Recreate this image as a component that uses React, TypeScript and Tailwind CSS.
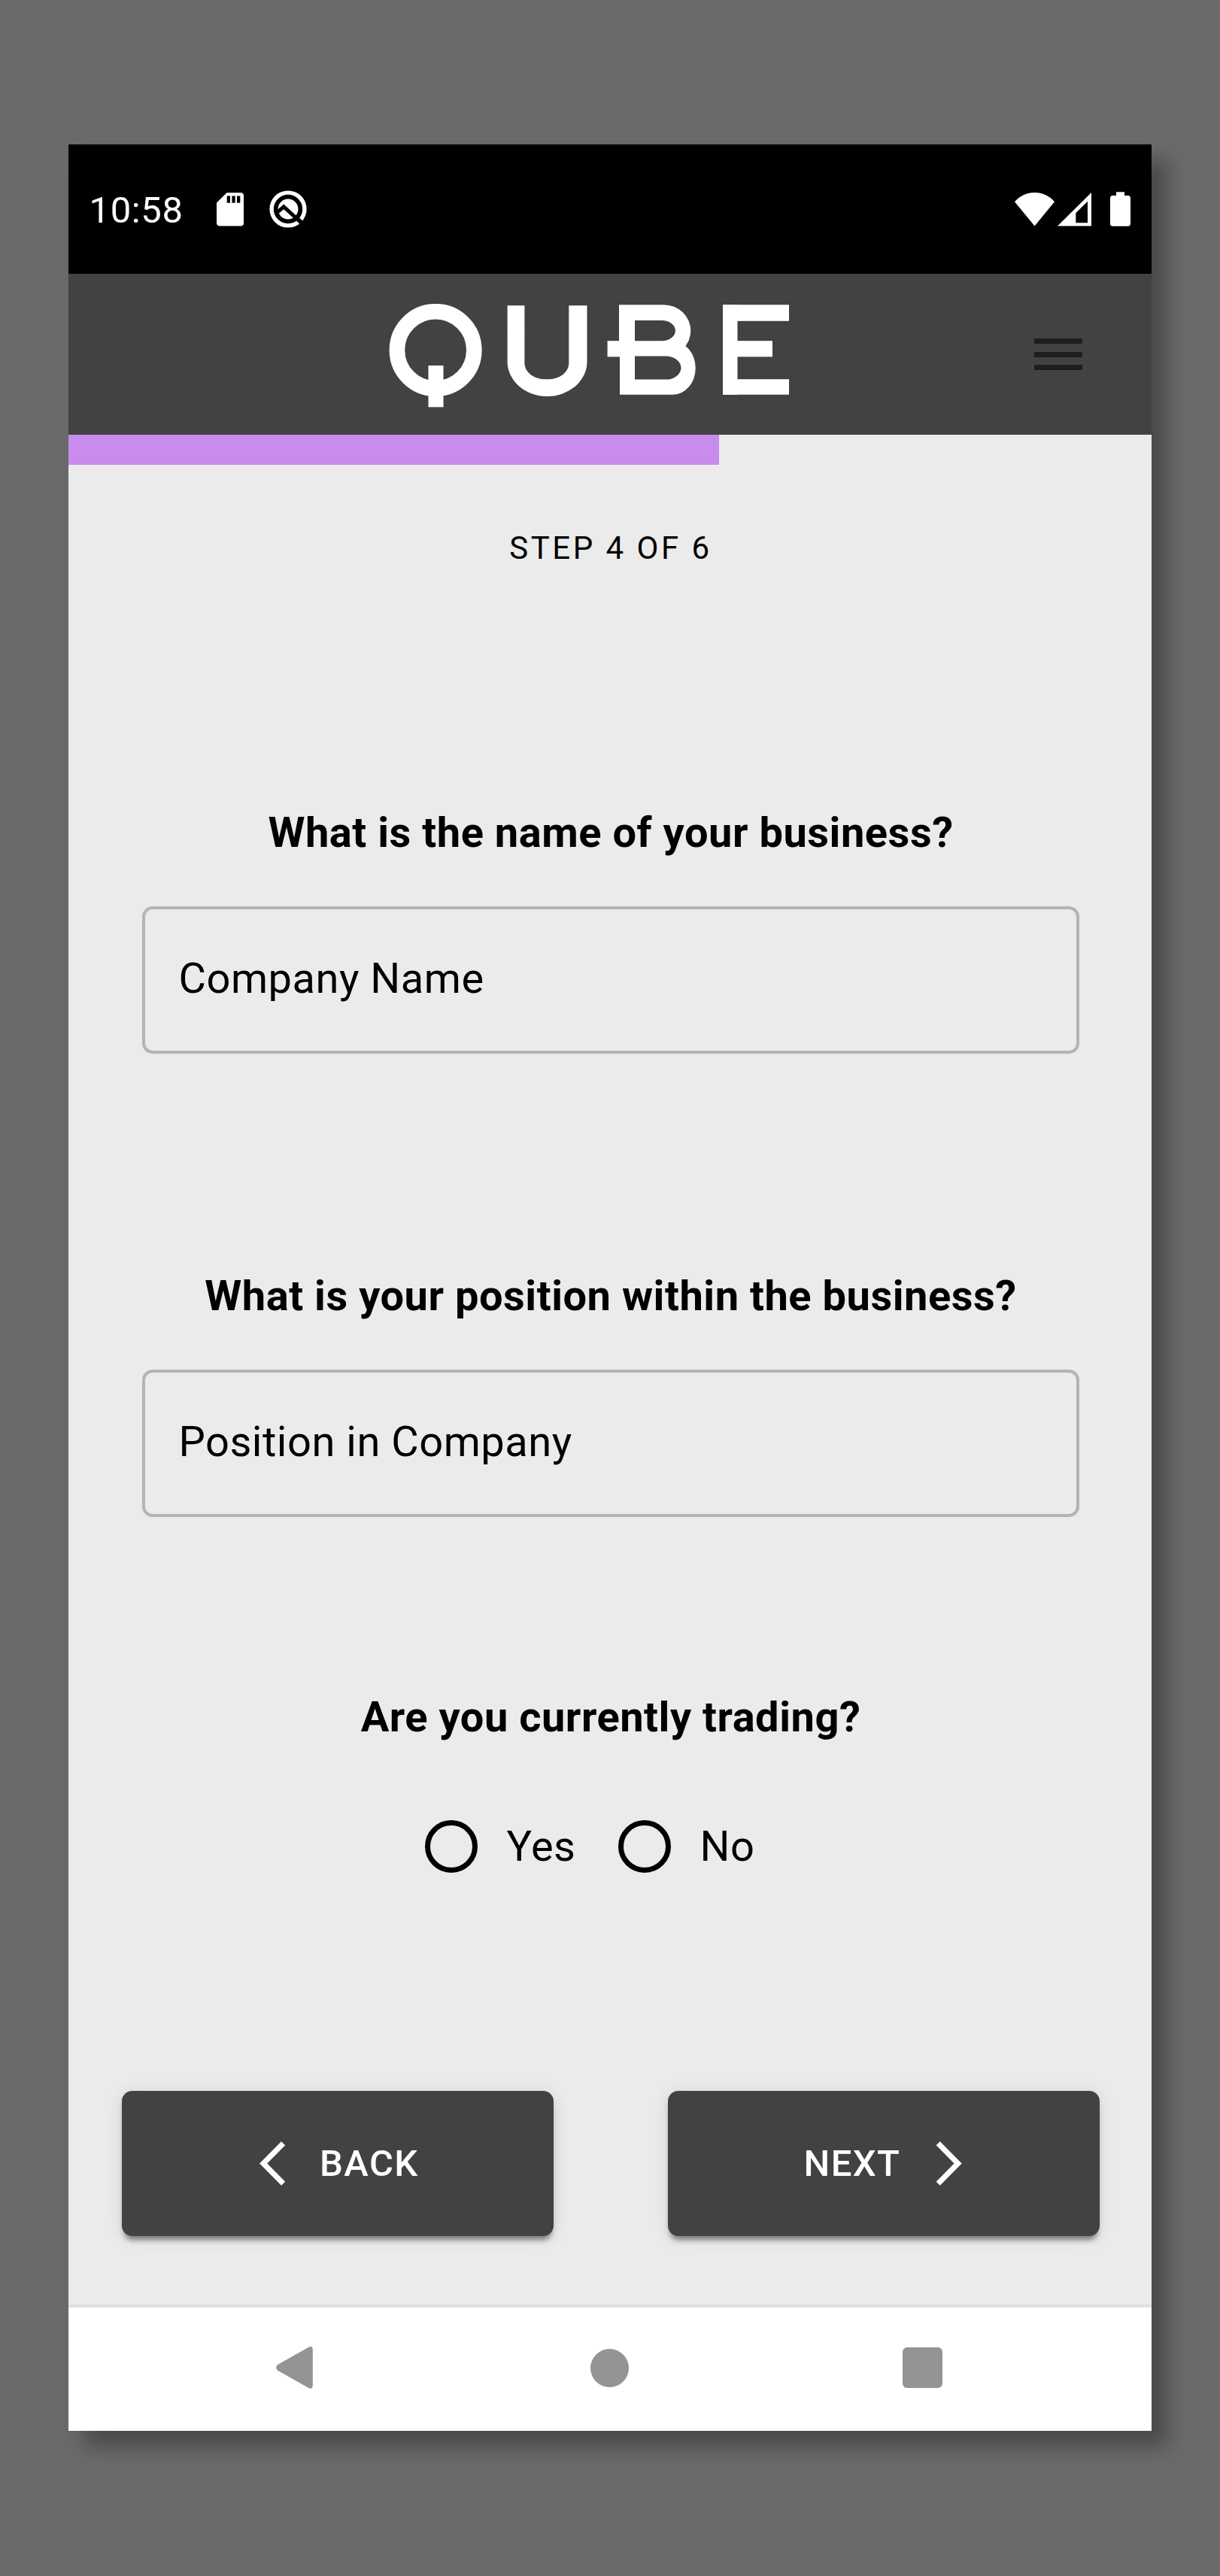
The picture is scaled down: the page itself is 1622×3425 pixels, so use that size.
import type { ReactNode } from "react";

function SdCardIcon() {
  return (
    <svg className="h-[45px] w-[36px]" viewBox="0 0 36 45" fill="none">
      <path d="M13.5 0.2H32a4 4 0 0 1 4 4V40.500a4 4 0 0 1-4 4H4a4 4 0 0 1-4-4V13.600Z" fill="#fff" />
      <rect x="13.700" y="4.500" width="4.300" height="9.200" fill="#000" />
      <rect x="20.400" y="4.500" width="4.300" height="9.200" fill="#000" />
      <rect x="27" y="4.500" width="4.300" height="9.200" fill="#000" />
    </svg>
  );
}

function BadgeIcon() {
  return (
    <svg className="h-[50px] w-[50px]" viewBox="-25 -25 50 50" fill="none">
      <circle r="21.900" stroke="#fff" strokeWidth="5.400" />
      <circle r="13.400" fill="#fff" />
      <path d="M-14.500 4.500L-5.800 -3.200L17.500 18" stroke="#000" strokeWidth="5" />
      <path d="M10 10.800L20 20" stroke="#000" strokeWidth="5.500" />
    </svg>
  );
}

function WifiIcon() {
  return (
    <svg className="h-[45px] w-[53px]" viewBox="0 0 53 45">
      <path d="M0 12.300C6.500 4.500 16.500 0 26.500 0C36.500 0 46.500 4.500 53 12.300L26.500 44.500Z" fill="#fff" />
    </svg>
  );
}

function SignalIcon() {
  return (
    <svg className="h-[45px] w-[45px]" viewBox="0 0 45 45">
      <path d="M0 44.600L45 0V44.600Z" fill="#fff" />
      <path d="M24.300 27.200L40 11.700V40.200H24.300Z" fill="#000" />
    </svg>
  );
}

function BatteryIcon() {
  return (
    <svg className="h-[46px] w-[27px]" viewBox="0 0 27 46" fill="#fff">
      <rect x="8" y="0.300" width="11" height="8" />
      <rect y="5" width="27" height="40.700" rx="3.500" />
    </svg>
  );
}

/* Wordmark assembled from rings, bars and rounded blocks */
function QubeLogo() {
  const bg = "#424242";
  return (
    <svg className="h-[138px] w-[532px]" viewBox="517 404 532 138" fill="#fff" role="img" aria-label="QUBE">
      <circle cx="579.100" cy="465.400" r="51.200" fill="none" stroke="#fff" strokeWidth="20.600" />
      <rect x="569.500" y="486" width="20" height="55.300" />

      <svg x="674" y="440" width="107" height="88" viewBox="674 440 107 88">
        <rect x="674.600" y="340" width="105.900" height="187" rx="53" ry="46" />
        <rect x="697.400" y="340" width="58.900" height="164.300" rx="28" ry="21" fill={bg} />
      </svg>
      <rect x="674.600" y="406.200" width="22.800" height="34.300" />
      <rect x="756.300" y="406.200" width="24.200" height="34.300" />

      <svg x="807" y="405" width="119" height="120" viewBox="807 405 119 120">
        <svg x="823" y="405" width="103" height="120" viewBox="823 405 103 120">
          <rect x="760" y="405.200" width="158.300" height="69" rx="36" ry="34.500" />
        </svg>
        <svg x="824" y="440" width="103" height="85" viewBox="824 440 103 85">
          <rect x="760" y="454" width="164.700" height="70.700" rx="30" ry="35.300" />
        </svg>
        <rect x="807.600" y="453.200" width="60" height="21.200" />
        <svg x="844" y="426" width="62" height="80" viewBox="844 426 62 80" fill={bg}>
          <rect x="800" y="426" width="97.900" height="27.300" rx="18" ry="13.600" />
          <rect x="800" y="473.600" width="105.500" height="31" rx="20" ry="15.500" />
        </svg>
      </svg>

      <rect x="961" y="405.200" width="19.500" height="119.500" />
      <rect x="961" y="405.200" width="88" height="21.600" />
      <rect x="961" y="453.200" width="66" height="21.200" />
      <rect x="961" y="504.200" width="88" height="20.500" />
    </svg>
  );
}

function StatusBar() {
  return (
    <div className="flex h-[172px] items-center bg-black text-white">
      <span className="ml-[27.5px] w-[169.5px] pt-[4px] text-[49px] leading-[58px] tracking-[0.6px]">10:58</span>
      <SdCardIcon />
      <div className="ml-[34px]">
        <BadgeIcon />
      </div>
      <div className="mr-[28px] ml-auto flex items-center">
        <WifiIcon />
        <div className="ml-[4px]">
          <SignalIcon />
        </div>
        <div className="ml-[25px]">
          <BatteryIcon />
        </div>
      </div>
    </div>
  );
}

function Header() {
  return (
    <header className="flex h-[214px] items-start bg-[#424242]">
      <div className="mt-[40px] ml-[426px]">
        <QubeLogo />
      </div>
      <button className="mt-[86px] mr-[92px] ml-auto flex w-[64px] flex-col gap-[10.5px]" aria-label="Menu">
        <span className="h-[7px] w-full bg-[#1e1e1e]" />
        <span className="h-[7px] w-full bg-[#1e1e1e]" />
        <span className="h-[7px] w-full bg-[#1e1e1e]" />
      </button>
    </header>
  );
}

function Question({ children }: { children: ReactNode }) {
  return (
    <h2 className="text-center text-[56px] leading-[66px] font-bold tracking-[0.52px] whitespace-nowrap">{children}</h2>
  );
}

function Field({ label }: { label: string }) {
  return (
    <div className="mt-[65px] h-[196px] rounded-[14px] border-4 border-[#b4b4b4] pt-[59px] pl-[44.5px] text-[56px] leading-[66px] tracking-[0.52px]">
      {label}
    </div>
  );
}

function RadioOption({ label }: { label: string }) {
  return (
    <label className="flex w-[257px] items-center gap-[38.5px] text-[56px] leading-[66px] tracking-[0.52px]">
      <span className="h-[70px] w-[70px] shrink-0 rounded-full border-[7px] border-black" />
      {label}
    </label>
  );
}

const buttonClass =
  "flex h-[193px] w-[574px] items-center rounded-[14px] bg-[#424242] text-[49px] leading-[58px] font-medium tracking-[1.4px] text-white shadow-[0_8px_7px_-3px_rgba(0,0,0,0.45),0_2px_22px_rgba(0,0,0,0.1)]";

function Buttons() {
  return (
    <div className="mt-[290px] flex justify-between pr-[69px] pl-[71px]">
      <button className={buttonClass}>
        <svg className="ml-[182.5px] h-[59px] w-[35px]" viewBox="0 0 35 59" fill="none">
          <path d="M31.600 2.700L5.200 29.500L31.600 56.300" stroke="#fff" strokeWidth="7.300" />
        </svg>
        <span className="ml-[45.5px]">BACK</span>
      </button>
      <button className={buttonClass}>
        <span className="ml-[180.5px]">NEXT</span>
        <svg className="ml-[47px] h-[59px] w-[35px]" viewBox="0 0 35 59" fill="none">
          <path d="M3.200 2.700L29.600 29.500L3.200 56.300" stroke="#fff" strokeWidth="7.300" />
        </svg>
      </button>
    </div>
  );
}

function NavBar() {
  return (
    <nav className="flex h-[168px] items-center border-t-4 border-[#e0e0e0] bg-white pb-[4px]">
      <svg className="ml-[276px] h-[58px] w-[50px]" viewBox="0 0 50 58" fill="#949494">
        <path d="M1.800 25.200L43.800 1.400Q48.800 -0.500 48.800 5V52.500Q48.800 58 43.800 56.200L1.800 32.400Q-1.600 28.800 1.800 25.200Z" />
      </svg>
      <span className="ml-[368px] h-[51px] w-[51px] rounded-full bg-[#949494]" />
      <span className="ml-[363.5px] h-[54px] w-[53px] rounded-[6px] bg-[#949494]" />
    </nav>
  );
}

export default function App() {
  return (
    <div className="h-[3425px] w-[1622px] overflow-hidden bg-[#6a6a6a] pt-[192px] pl-[91px] font-['Roboto',sans-serif] text-black">
      <div className="flex h-[3040px] w-[1440px] flex-col bg-[#ebebeb] shadow-[21px_21px_24px_rgba(0,0,0,0.3)]">
        <StatusBar />
        <Header />
        <main className="flex-1">
          <div className="h-[40px] w-[865px] bg-[#c98bec]" />
          <p className="mt-[86px] pl-[2px] text-center text-[42px] leading-[50px] tracking-[3.5px]">STEP 4 OF 6</p>
          <section className="mt-[320px] pr-[96px] pl-[98px]">
            <Question>What is the name of your business?</Question>
            <Field label="Company Name" />
          </section>
          <section className="mt-[289px] pr-[96px] pl-[98px]">
            <Question>What is your position within the business?</Question>
            <Field label="Position in Company" />
          </section>
          <section className="mt-[233px] pr-[96px] pl-[98px]">
            <Question>Are you currently trading?</Question>
            <div className="mt-[104px] flex pl-[376px]">
              <RadioOption label="Yes" />
              <RadioOption label="No" />
            </div>
          </section>
          <Buttons />
        </main>
        <NavBar />
      </div>
    </div>
  );
}
